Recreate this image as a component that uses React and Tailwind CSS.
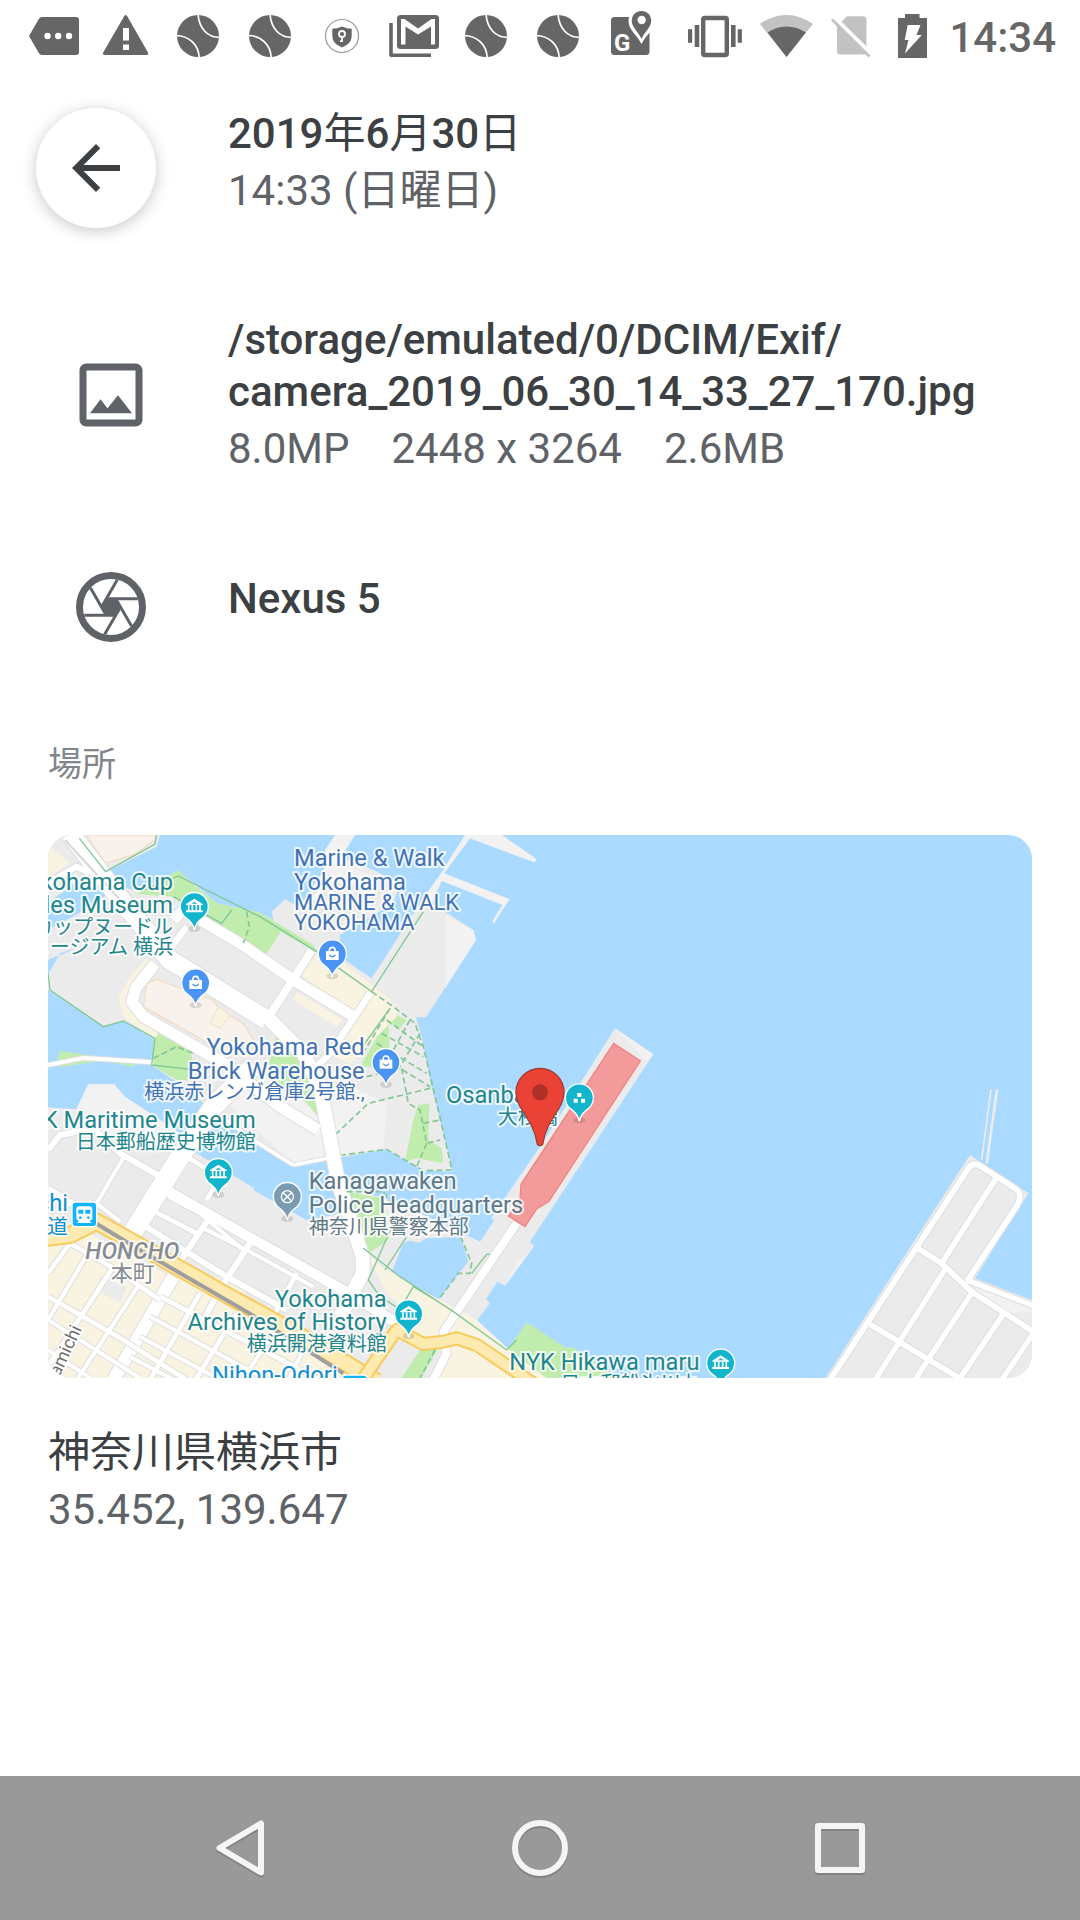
import React from "react";

const GREY = "#666666";

/* ---------- status bar icons ---------- */

function StatusIcon({ x, width = 72, label, children }) {
  return (
    <svg
      role="img"
      aria-label={label}
      width={width}
      height="72"
      viewBox={`${x} 0 ${width} 72`}
      fill={GREY}
      className="shrink-0"
    >
      {children}
    </svg>
  );
}

function BallIcon() {
  return (
    <StatusIcon x={-36} label="Sports">
      <circle cx="0" cy="36" r="21" />
      <g fill="none" stroke="#fff" strokeWidth="1.7">
        <path d="M0 14C1 28 9 37.500 22 37.500" />
        <path d="M-22 35.500C-9 35.500 1 45 1.200 58" />
      </g>
    </StatusIcon>
  );
}

function StatusBar() {
  return (
    <div className="flex h-[72px] shrink-0 items-start justify-between pl-[18px] pr-6">
      <div className="flex">
        <StatusIcon x={18} label="More notifications">
          <path d="M42 17H76q3 0 3 3V52q0 3-3 3H42q-2 0-3.200-2L29 36 38.800 19q1.200-2 3.200-2Z" />
          <g fill="#fff">
            <circle cx="47.500" cy="36" r="3.200" />
            <circle cx="58.200" cy="36" r="3.200" />
            <circle cx="69" cy="36" r="3.200" />
          </g>
        </StatusIcon>
        <StatusIcon x={90} label="Warning">
          <path d="M124.300 16q1.400-2 2.800 0L148 52.500q.8 2.500-1.500 2.500H104.700q-2.300 0-1.500-2.500Z" />
          <path d="M123 28h6v12.500h-6zM123 44.500h6v5.500h-6z" fill="#fff" />
        </StatusIcon>
        <BallIcon />
        <BallIcon />
        <StatusIcon x={306} label="Privacy">
          <circle cx="342" cy="36" r="16.500" fill="#fff" stroke="#999" strokeWidth="1.200" />
          <path d="M342 26.500q5 2.300 9.700 2.300V36q0 7.500-9.700 11.500Q332.300 43.500 332.300 36V28.800Q337 28.800 342 26.500Z" />
          <circle cx="342" cy="34" r="3" fill="none" stroke="#fff" strokeWidth="1.800" />
          <path d="M342 37v5M342 41.200h-2" stroke="#fff" strokeWidth="1.800" />
        </StatusIcon>
        <StatusIcon x={378} label="Mail">
          <path d="M391 23V55.200H431" fill="none" stroke={GREY} strokeWidth="3.600" strokeLinejoin="round" />
          <rect x="397" y="15" width="42" height="34" rx="3.500" />
          <path d="M401 19h3.500L418 28.500 431.500 19H435V44.500H431V26.500L418 34.500 405.500 26.500V44.500H401Z" fill="#fff" />
        </StatusIcon>
        <BallIcon />
        <BallIcon />
        <StatusIcon x={594} label="Maps">
          <rect x="611" y="17" width="38.500" height="38" rx="3.500" />
          <path d="M641.500 8.500c-8.500 0-13 5.500-13 12.500 0 9 8 13 13 23 5-10 13-14 13-23 0-7-4.500-12.500-13-12.500Z" fill="#fff" />
          <path
            d="M641.500 11c-5.800 0-9.700 4.300-9.700 9.700 0 6.800 6.700 10.800 9.700 18.300 3-7.500 9.700-11.500 9.700-18.300 0-5.400-3.900-9.700-9.700-9.700Z"
          />
          <circle cx="641.700" cy="20" r="4.200" fill="#fff" />
          <text x="614" y="51" fontSize="24" fontWeight="700" fontFamily="Roboto, sans-serif" fill="#fff">
            G
          </text>
        </StatusIcon>
      </div>

      <div className="flex">
        <StatusIcon x={680} label="Vibrate">
          <rect x="704.200" y="18" width="23.600" height="37" rx="1.500" fill="none" stroke={GREY} strokeWidth="4.400" />
          <path d="M695.700 25h4.600v22h-4.600zM689 29.200h4.200v13.600H689zM732 25h4.600v22H732zM738.700 29.200h4.200v13.600h-4.200z" />
        </StatusIcon>
        <StatusIcon x={752} label="Wi-Fi">
          <path d="M761 24A44 44 0 0 1 814 24L787.500 57Z" fill="#c2c2c2" />
          <path d="M768.600 32.500A33 33 0 0 1 806.800 32.500L787.500 57Z" />
        </StatusIcon>
        <StatusIcon x={824} width={60} label="No SIM card">
          <path d="M848 16.200H864q3.500 0 3.500 3V51.500q0 3-3.500 3H841.500q-3.500 0-3.500-3V26Z" fill="#c2c2c2" />
          <path d="M834 16.500L873 54.500" stroke="#fff" strokeWidth="4" />
          <path d="M833 19.500L870.500 56.500" stroke="#c2c2c2" strokeWidth="2.800" />
        </StatusIcon>
        <StatusIcon x={884} width={66} label="Battery charging">
          <path d="M906 14h14.500v4H928v40h-29V18h7Z" />
          <path d="M908.700 25H921.500L917.500 35H922.800L906 53.500 909.500 40H905.700Z" fill="#fff" />
        </StatusIcon>
        <span className="text-[42px] font-medium leading-[76px] text-[#666666]">14:34</span>
      </div>
    </div>
  );
}

/* ---------- detail icons ---------- */

function ImageIcon() {
  return (
    <svg aria-hidden="true" viewBox="0 0 24 24" fill="#5f6368" className="size-[84px]">
      <path d="M19 5v14H5V5h14m0-2H5c-1.100 0-2 .9-2 2v14c0 1.100.9 2 2 2h14c1.100 0 2-.9 2-2V5c0-1.100-.9-2-2-2z" />
      <path d="M6 17.200L9 13.200 11 15.800 14 12.100 18 17.200Z" />
    </svg>
  );
}

function ApertureIcon() {
  return (
    <svg aria-hidden="true" viewBox="-12 -12 24 24" className="size-[84px]" fill="none" stroke="#5f6368">
      <circle r="9" strokeWidth="2" />
      <path d="M-3 0L-1.500-2.600H1.500L3 0 1.500 2.600H-1.500Z" fill="#5f6368" stroke="none" />
      {[0, 60, 120, 180, 240, 300].map((a) => (
        <path key={a} d="M-2.700 0L1.800-7.800" strokeWidth="0.850" transform={`rotate(${a})`} />
      ))}
    </svg>
  );
}

/* ---------- map ---------- */

const WATER = "#aadaff";
const LAND = "#ebebeb";
const PALE = "#f2f2f2";
const PARK = "#c0ecae";
const SAND = "#f9f3e1";

function Road({ d, w = 16 }) {
  return (
    <g fill="none" strokeLinejoin="round">
      <path d={d} stroke="#dedede" strokeWidth={w + 6} />
      <path d={d} stroke="#ffffff" strokeWidth={w} />
    </g>
  );
}

function Roads({ lines }) {
  return (
    <g fill="none" strokeLinejoin="round">
      {lines.map(([d, w]) => (
        <path key={d} d={d} stroke="#dedede" strokeWidth={w + 6} />
      ))}
      {lines.map(([d, w]) => (
        <path key={d} d={d} stroke="#ffffff" strokeWidth={w} />
      ))}
    </g>
  );
}

function Label({ x, y, color, anchor = "start", lines }) {
  return (
    <g
      fill={color}
      stroke="#ffffff"
      strokeOpacity="0.8"
      strokeWidth="12"
      strokeLinejoin="round"
      paintOrder="stroke"
      textAnchor={anchor}
    >
      {lines.map(([text, dy, size]) => (
        <text key={text} x={x} y={y + dy} fontSize={size} className="font-[Roboto,'Noto_Sans_CJK_JP',sans-serif]">
          {text}
        </text>
      ))}
    </g>
  );
}

function Pin({ x, y, color, children }) {
  return (
    <g transform={`translate(${x} ${y})`}>
      <ellipse cx="0" cy="66" rx="18" ry="10" fill="#000" opacity="0.120" />
      <path
        d="M0 70C-3 52-10 44-24 34A42 42 0 1 1 24 34C10 44 3 52 0 70Z"
        fill={color}
        stroke="#fff"
        strokeWidth="4"
      />
      {children}
    </g>
  );
}

const MuseumPin = ({ x, y }) => (
  <Pin x={x} y={y} color="#12b5cb">
    <path d="M-25-8L0-24 25-8V-5H-25ZM-25 11H25V17H-25Z" fill="#fff" />
    <path d="M-9-9L0-15 9-9Z" fill="#12b5cb" />
    <path d="M-17-5V12M-6-5V12M6-5V12M17-5V12" stroke="#fff" strokeWidth="5" />
  </Pin>
);

const ShopPin = ({ x, y }) => (
  <Pin x={x} y={y} color="#4a94f3">
    <path d="M-19-9H19V18H-19Z" fill="#fff" />
    <path d="M-9-8Q-9-20 0-20 9-20 9-8" fill="none" stroke="#fff" strokeWidth="5" />
    <path d="M-9 3Q0 14 9 3" fill="none" stroke="#4a94f3" strokeWidth="4" />
  </Pin>
);

function StationIcon({ x, y }) {
  return (
    <g transform={`translate(${x} ${y})`}>
      <rect x="-37" y="-37" width="74" height="74" rx="10" fill="#12b5fb" stroke="#fff" strokeWidth="4" />
      <path d="M-24-14Q-24-24-14-24H14Q24-24 24-14V14L16 20 22 26H-22L-16 20-24 14Z" fill="#fff" />
      <path d="M-18-14H-3V-2H-18ZM3-14H18V-2H3Z" fill="#12b5fb" />
      <circle cx="-12" cy="10" r="4" fill="#12b5fb" />
      <circle cx="12" cy="10" r="4" fill="#12b5fb" />
    </g>
  );
}

function LandAreas() {
  return (
    <g>
      {/* Shinko district and its piers */}
      <path
        fill={LAND}
        d="M24 45H360L350 80 197 157 235 200 300 212 415 152 530 250 660 278 700 300 695 275 735 238 778 262 885 100 885 45H945L905 110 1000 150 1080 190 1060 250 900 345 900 410 995 475 1150 235 1200 165 1275 45H1385L1490 118 1484 127 1290 55 1212 160 1408 238 1362 309 1356 306 1388 255 1205 182 1175 250 1300 330 1308 360 1158 592H1128L1148 660 1172 790 1200 900 1238 1055 1150 1052 1040 988 860 1020 760 1036 640 960 520 880 440 800 400 780 335 735 345 660 250 603 190 620 24 510Z"
      />
      <path
        fill={PALE}
        d="M855 90L885 45H945L890 130 1010 170 1000 200 850 190ZM1150 235L1200 165 1275 45H1385L1490 118 1484 127 1290 55 1212 160 1408 238 1362 309 1356 306 1388 255 1205 182 1175 250ZM1215 285L1300 330 1308 360 1215 505ZM540 830L760 1030 1030 985 1040 850 900 780 600 760Z"
      />
      <path fill={WATER} d="M24 250L120 178 200 225 125 275 24 330ZM120 380L60 400 24 465V420Z" />
      {/* Kannai shoreline */}
      <path
        fill={LAND}
        d="M24 862L108 868 145 793H222L255 830 330 880 440 990 455 990 800 1200 880 1120 940 1110 1060 1140 1280 1240 1320 1265 1363 1200 1353 1195 1500 980 1725 625 1840 703 1470 1265 1482 1278 1395 1397 1372 1385 1338 1438 1350 1450 1312 1500 1320 1520 1403 1590 1700 1674H24Z"
      />
      <path fill={PALE} d="M110 868L145 793H222L255 830 330 880 420 940 300 960 110 930ZM1482 1278L1395 1397 1430 1330ZM1725 625L1840 703 1815 725 1790 690Z" />
      <path fill={WATER} d="M1110 1262L1135 1268 1160 1255 1262 1250 1285 1325 1260 1355 1195 1440 1055 1355 1090 1270Z" />
      <path fill={WATER} d="M700 1060L760 1038 1040 992 1150 1060 1260 1060 1320 1180 1310 1260 1240 1225 1050 1140 925 1100 905 1180 800 1200 640 1110Z" />
    </g>
  );
}

function ParksAndBlocks() {
  return (
    <g>
      <path
        fill={PARK}
        d="M290 222L415 150 455 190 530 250 660 278 820 375 835 400 722 335 680 402 560 330 450 260 400 230ZM555 515L640 580 630 590 550 525ZM355 640L450 685 460 730 440 780 410 780 335 735 340 665ZM60 692L285 728 280 740 190 722 60 742 52 718ZM710 640L880 800 860 920 800 850 680 760ZM1045 590L1050 740 960 740ZM1050 575L1100 600 1080 625 1040 610ZM1135 855L1168 850 1165 960 1205 985 1210 1030 1130 1015 1095 1025 1120 900ZM920 1115L1030 1135 1045 1260 985 1300 955 1250ZM1140 1590L1200 1575 1145 1674H1085Z"
      />
      <path fill={PARK} d="M1460 1507L1580 1585 1595 1580 1740 1674H1480L1403 1590Z" />
      <path fill={SAND} d="M24 75L90 130 24 170ZM320 415L270 470 235 530 250 590 345 655 360 625 275 570 285 500 345 440Z" />
      <path fill={SAND} d="M830 395L900 420 1040 530 1070 560 1070 590 930 730 860 700 990 520 930 590 780 460Z" />
      <path fill={SAND} d="M770 515L910 600 890 620 760 540Z" />
      <path fill="#f8f1ec" stroke="#f3dcc5" strokeWidth="4" d="M140 45L195 130 280 105 345 60V45Z" />
      <path fill="#f8f1ec" stroke="#f3dcc5" strokeWidth="4" d="M350 478L320 490 310 560 560 700 640 660 610 610 540 570 520 540Z" />
      <path fill={SAND} stroke="#f3dcc5" strokeWidth="3" d="M510 610L535 560 570 585 540 625Z" />
      <path fill={SAND} d="M970 1280L1020 1340 1200 1440 1310 1500 1420 1600 1520 1674H1180L1230 1590 1040 1510 1130 1500 1040 1420Z" />
      <path fill={SAND} d="M24 1270L150 1240 400 1375 545 1370 620 1410 600 1450 960 1674H24Z" />
      <path fill={LAND} d="M180 1370L260 1400 240 1450 170 1410ZM940 1560L1010 1580 960 1674H900Z" />
    </g>
  );
}

function Streets() {
  return (
    <g>
      <Roads
        lines={[
          ["M24 190L110 140 150 160", 18],
          ["M800 262L850 200", 10],
          ["M90 40L240 235 390 420 520 500 680 600", 56],
          ["M400 300L430 270 600 370 760 480 950 595", 32],
          ["M380 400L440 320", 20],
          ["M815 392L680 600", 24],
          ["M992 518L870 700 830 740", 20],
          ["M345 432L290 500 275 545 310 590 560 735 720 860 835 930", 34],
          ["M680 590L790 700 840 800 865 930 895 1090 925 1180 968 1310V1360L900 1490", 42],
          ["M24 735L130 714 340 727", 12],
          ["M640 740L520 860 420 1010 270 1250", 58],
          ["M400 1370L220 1680", 38],
          ["M24 990L60 945 160 925 240 1000 370 1075", 18],
          ["M255 1005L170 1150 240 1205", 12],
          ["M24 1108L110 1160 300 1270", 22],
          ["M440 1010L540 1070 500 1140", 14],
          ["M360 1100L900 1405 1080 1515", 30],
          ["M335 1170L470 1240", 14],
          ["M385 1130L480 1180 610 1290", 12],
          ["M310 1215L430 1290 560 1370 740 1470", 18],
          ["M500 1205L410 1340", 18],
          ["M630 1270L545 1400 490 1500", 18],
          ["M490 1225L620 1290 820 1400", 12],
          ["M770 1360L700 1490", 14],
          ["M760 1035L640 960 560 900M760 1035L860 1015", 10],
        ]}
      />
      <Roads
        lines={[
          ["M24 1360L90 1270 230 1350 360 1440", 14],
          ["M24 1430L130 1490 250 1560 440 1680", 14],
          ["M24 1500L120 1560 300 1674", 12],
          ["M24 1590L150 1674", 12],
          ["M150 1290L24 1500", 12],
          ["M220 1340L24 1640", 14],
          ["M300 1390L110 1680", 12],
          ["M360 1430L860 1690", 14],
          ["M330 1490L700 1690", 12],
          ["M300 1550L560 1690", 12],
          ["M270 1610L420 1690", 12],
          ["M480 1420L330 1680", 14],
          ["M590 1480L460 1690", 14],
          ["M700 1540L600 1690", 12],
          ["M790 1590L740 1690", 12],
        ]}
      />
      <Road d="M1430 1210L1210 1535 1220 1600 1180 1680" w={24} />
      {/* arterial road with the railway under it */}
      <g fill="none" strokeLinejoin="round">
        <path d="M10 1255L90 1245 170 1205 560 1425 760 1535 1010 1685" stroke="#f7cb5c" strokeWidth="54" />
        <path d="M10 1255L90 1245 170 1205 560 1425 760 1535 1010 1685" stroke="#fdeab0" strokeWidth="42" />
        <path d="M960 1690L1070 1530 1150 1572 1210 1565 1250 1555 1310 1575 1480 1690" stroke="#f7cb5c" strokeWidth="42" />
        <path d="M960 1690L1070 1530 1150 1572 1210 1565 1250 1555 1310 1575 1480 1690" stroke="#fdeab0" strokeWidth="30" />
        <path d="M110 1175L300 1290 620 1475 910 1660" stroke="#9e9e9e" strokeWidth="12" />
        <path d="M75 60L250 250" stroke="#d6d6d6" strokeWidth="6" />
      </g>
    </g>
  );
}

function Footpaths() {
  return (
    <g fill="none" stroke="#82c795" strokeWidth="4">
      <path d="M118 55L197 155 345 72 350 45M300 215L415 168 660 290 830 395M24 460L30 510 190 620 250 603 345 655 335 735 470 750M400 230L545 310 575 270M1150 275L995 515 890 440M1050 565L960 690" />
      <path d="M970 1285L1080 1370 1240 1475 1400 1590 1430 1560M985 1380L1060 1210M1035 1350L1100 1250M985 1380L1020 1430 1100 1480M1195 1445L1120 1400 1090 1450" />
      <g strokeDasharray="18 10" strokeWidth="5">
        <path d="M995 515L1060 560 1125 610 1150 680 1195 870 1236 1050 1150 1052 1040 988 905 1005M340 715L410 680 460 700M620 275L628 320 610 370" />
        <path d="M1050 565L975 690M1040 600L1150 680M1025 640L1150 710M1010 670L1160 760M1110 600L1060 690M1140 640L1080 740M980 770L1080 745 1170 800M1085 745L1105 850 1140 870 1160 970 1200 960M1170 805L985 850 890 940M1150 910L1200 900M1160 970L1130 1040M1262 1250L1295 1330 1290 1360H1255L1195 1440M1185 1590L1140 1674" />
        <path d="M920 1115L1030 1115 1060 1160" />
      </g>
      <path d="M1295 1360L1340 1303H1350" />
    </g>
  );
}

function HarborDock() {
  return (
    <g transform="translate(2160 720)">
      <path fill={LAND} d="M195 956L630 285 805 400 645 655 816 720V956Z" />
      <path fill="none" stroke="#ececec" strokeWidth="5" d="M693 87L665 300" />
      <path fill="none" stroke="#ececec" strokeWidth="8" d="M711 88L680 310" />
      <path fill={PALE} d="M625 670L816 740V755L740 760Z" />
      <Roads
        lines={[
          ["M210 960L625 325Q635 310 655 314L765 385Q790 400 772 435L620 665", 17],
          ["M620 660L820 737", 16],
          ["M470 563L545 610 635 695 820 815", 17],
          ["M708 355L545 610", 17],
          ["M330 793L600 955", 17],
          ["M555 628L415 850 345 960", 16],
          ["M635 700L500 905 465 960", 16],
          ["M728 765L600 955", 17],
          ["M820 820L725 960", 16],
        ]}
      />
    </g>
  );
}

function MapPreview() {
  const teal = "#1d868c";
  const blue = "#4272b4";
  const slate = "#5f7886";
  const station = "#0f8fd0";
  return (
    <svg
      role="img"
      aria-label="Map of Osanbashi, Yokohama"
      viewBox="24 45 2952 1629"
      className="block h-auto w-full rounded-3xl bg-[#aadaff]"
    >
      <LandAreas />
      <ParksAndBlocks />
      <Streets />
      <Footpaths />
      <HarborDock />

      {/* Osanbashi terminal */}
      <path
        transform="translate(1260 540)"
        d="M461 130L541 183 267 604 230 627 195 680 145 648 180 600 183 553Z"
        fill="#f39a9a"
        stroke="#f28383"
        strokeWidth="4"
      />

      <Label x={399} y={210} color={teal} anchor="end" lines={[["Yokohama Cup", 0, 71], ["Noodles Museum", 70, 71], ["カップヌードル", 132, 60], ["ミュージアム 横浜", 192, 60]]} />
      <Label x={762} y={138} color={blue} lines={[["Marine & Walk", 0, 71], ["Yokohama", 71, 71], ["MARINE & WALK", 132, 66], ["YOKOHAMA", 193, 66]]} />
      <Label x={974} y={706} color={blue} anchor="end" lines={[["Yokohama Red", 0, 71], ["Brick Warehouse", 71, 71], ["横浜赤レンガ倉庫2号館.,", 132, 60]]} />
      <Label x={647} y={924} color={teal} anchor="end" lines={[["NYK Maritime Museum", 0, 71], ["日本郵船歴史博物館", 64, 60]]} />
      <Label x={806} y={1108} color={slate} lines={[["Kanagawaken", 0, 71], ["Police Headquarters", 71, 71], ["神奈川県警察本部", 134, 60]]} />
      <Label x={84} y={1173} color={station} anchor="end" lines={[["Bashamichi", 0, 71], ["馬車道", 70, 62]]} />
      <Label x={1040} y={1461} color={teal} anchor="end" lines={[["Yokohama", 0, 71], ["Archives of History", 70, 71], ["横浜開港資料館", 132, 60]]} />
      <Label x={1218} y={848} color={teal} lines={[["Osanbashi", 0, 71]]} />
      <Label x={1553} y={912} color={teal} anchor="end" lines={[["大桟橋", 0, 60]]} />
      <Label x={1408} y={1649} color={teal} lines={[["NYK Hikawa maru", 0, 71]]} />
      <Label x={1561} y={1712} color={teal} lines={[["日本郵船氷川丸", 0, 60]]} />
      <Label x={516} y={1690} color={station} lines={[["Nihon-Odori", 0, 71]]} />
      <Label x={278} y={1382} color="#868c95" anchor="middle" lines={[["本町", 0, 66]]} />
      <text
        x="136"
        y="1316"
        fontSize="70"
        fill="#868c95"
        stroke="#fff"
        strokeOpacity="0.8"
        strokeWidth="12"
        paintOrder="stroke"
        className="font-[Roboto,sans-serif] font-medium italic"
      >
        HONCHO
      </text>
      <text
        transform="translate(126 1526) rotate(-65)"
        fontSize="54"
        textAnchor="end"
        fill="#707070"
        stroke="#fff"
        strokeWidth="10"
        paintOrder="stroke"
        className="font-[Roboto,sans-serif]"
      >
        Bashamichi
      </text>

      <MuseumPin x={463} y={260} />
      <ShopPin x={467} y={489} />
      <ShopPin x={877} y={402} />
      <ShopPin x={1038} y={728} />
      <MuseumPin x={535} y={1058} />
      <MuseumPin x={1106} y={1482} />
      <MuseumPin x={2042} y={1630} />
      <Pin x={742} y={1130} color="#7b9bb0">
        <g fill="none" stroke="#fff" strokeWidth="4">
          <circle r="18" />
          <path d="M-12-12L12 12M12-12L-12 12" />
        </g>
      </Pin>
      <Pin x={1618} y={834} color="#12b5cb">
        <path d="M-6-15H6V-3H-6ZM-17 2H-5V14H-17ZM5 2H17V14H5Z" fill="#fff" />
      </Pin>
      <StationIcon x={133} y={1183} />
      <StationIcon x={944} y={1702} />

      {/* selected location */}
      <g transform="translate(1500 817)">
        <path
          d="M0-72A72 72 0 0 1 72 0C72 52 18 82 9 152Q8 160 0 160-8 160-9 152C-18 82-72 52-72 0A72 72 0 0 1 0-72Z"
          fill="#ea4335"
          stroke="#a63a33"
          strokeWidth="4"
        />
        <circle r="24" fill="#b03028" />
      </g>
    </svg>
  );
}

/* ---------- page ---------- */

function SystemNav() {
  const button = "flex h-[144px] w-[300px] min-w-0 items-center justify-center";
  const icon = "size-[72px] drop-shadow-[0_2px_0_rgba(0,0,0,0.15)]";
  return (
    <nav className="flex shrink-0 justify-center bg-[#999999]">
      <button type="button" aria-label="Back" className={button}>
        <svg viewBox="0 0 72 72" fill="none" stroke="#f5f5f5" strokeWidth="6" strokeLinejoin="round" className={icon}>
          <path d="M57 11.500V60.500L15.500 36Z" />
        </svg>
      </button>
      <button type="button" aria-label="Home" className={button}>
        <svg viewBox="0 0 72 72" fill="none" stroke="#f5f5f5" strokeWidth="6" className={icon}>
          <circle cx="36" cy="36" r="25" />
        </svg>
      </button>
      <button type="button" aria-label="Recent apps" className={button}>
        <svg viewBox="0 0 72 72" fill="none" stroke="#f5f5f5" strokeWidth="6" strokeLinejoin="round" className={icon}>
          <rect x="14" y="14" width="44" height="44" />
        </svg>
      </button>
    </nav>
  );
}

export default function App() {
  const title = "text-[42px] font-medium leading-[52px] text-[#3c4043]";
  const sub = "mt-[5px] text-[42px] leading-[52px] text-[#5f6368]";
  return (
    <div className="flex min-h-screen flex-col bg-white font-[Roboto,'Noto_Sans_CJK_JP',sans-serif]">
      <StatusBar />

      <main className="flex-1 pb-12">
        <header className="grid grid-cols-[228px_1fr] pt-9">
          <div className="pl-9">
            <button
              type="button"
              aria-label="戻る"
              className="flex size-[120px] items-center justify-center rounded-full bg-white shadow-[0_3px_16px_rgba(0,0,0,0.22)]"
            >
              <svg aria-hidden="true" viewBox="0 0 24 24" fill="#3c4043" className="size-[72px]">
                <path d="M20 11H7.830l5.590-5.590L12 4l-8 8 8 8 1.410-1.410L7.830 13H20v-2z" />
              </svg>
            </button>
          </div>
          <div>
            <h1 className={title}>
              2019<span className="font-normal">年</span>6<span className="font-normal">月</span>30
              <span className="font-normal">日</span>
            </h1>
            <p className={sub}>14:33 (日曜日)</p>
          </div>
        </header>

        <section className="mt-[86px] grid grid-cols-[228px_1fr] items-center">
          <div className="pl-[69px]">
            <ImageIcon />
          </div>
          <div className="min-w-0 pr-12">
            <h2 className={title}>
              /storage/emulated/0/DCIM/Exif/
              <wbr />
              camera_2019_06_30_14_33_27_170.jpg
            </h2>
            <p className={`${sub} flex flex-wrap gap-x-[42px]`}>
              <span>8.0MP</span>
              <span>2448 x 3264</span>
              <span>2.6MB</span>
            </p>
          </div>
        </section>

        <section className="mt-[90px] grid grid-cols-[228px_1fr] items-start">
          <div className="pl-[69px]">
            <ApertureIcon />
          </div>
          <h2 className={`${title} pt-2`}>Nexus 5</h2>
        </section>

        <section className="px-12 pt-[95px]">
          <h3 className="text-[34px] leading-[40px] text-[#80868b]">場所</h3>
          <a href="#map" className="mt-[51px] block">
            <MapPreview />
          </a>
          <p className="mt-[49px] text-[42px] leading-[52px] text-[#3c4043]">神奈川県横浜市</p>
          <p className={sub}>35.452, 139.647</p>
        </section>
      </main>

      <SystemNav />
    </div>
  );
}
